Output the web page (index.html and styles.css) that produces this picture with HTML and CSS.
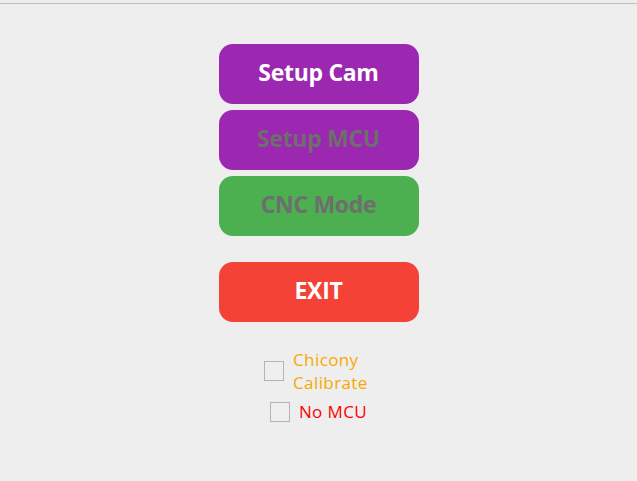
FILE: index.html
```html
<!DOCTYPE html>
<html lang="en">
<head>
    <meta charset="UTF-8">
    <title>Control</title>
    <link rel="stylesheet" href="styles.css">
</head>
<body>
    <div class="topbar"></div>
    <div class="panel">
        <button class="btn btn-purple">Setup Cam</button>
        <button class="btn btn-purple disabled">Setup MCU</button>
        <button class="btn btn-green disabled">CNC Mode</button>
        <button class="btn btn-red exit">EXIT</button>

        <div class="options">
            <label class="option chicony">
                <span class="box"></span>
                <span class="text">Chicony Calibrate</span>
            </label>
            <label class="option nomcu">
                <span class="box"></span>
                <span class="text">No MCU</span>
            </label>
        </div>
    </div>
</body>
</html>
```

FILE: styles.css
```css
body {
    margin: 0;
    padding: 0;
    background-color: #eeeeee;
    font-family: 'Open Sans', 'Noto Sans', sans-serif;
}

.topbar {
    height: 3px;
    border-bottom: 1px solid #bdbdbd;
}

.panel {
    display: flex;
    flex-direction: column;
    align-items: center;
    padding-top: 40px;
    gap: 6px;
}

.btn {
    width: 200px;
    height: 60px;
    border: none;
    border-radius: 14px;
    color: white;
    font-family: inherit;
    font-size: 23px;
    font-weight: 700;
    letter-spacing: -0.3px;
    padding: 0 0 4px 0;
}

.btn-purple { background-color: #9c27b0; }
.btn-green { background-color: #4caf50; }
.btn-red { background-color: #f44336; }

.disabled { color: #6e6e6e; }

.exit { margin-top: 20px; }

.options {
    display: flex;
    flex-direction: column;
    align-items: center;
    gap: 6px;
    margin-top: 20px;
}

.option {
    display: flex;
    align-items: center;
    gap: 9px;
    font-size: 17px;
    line-height: 23px;
    letter-spacing: 0.4px;
}

.box {
    width: 18px;
    height: 18px;
    border: 1px solid #b4b4b4;
    background-color: #efefef;
}

.chicony .text {
    color: #f7a800;
    width: 80px;
}

.nomcu .text {
    color: #ff0000;
}
```
